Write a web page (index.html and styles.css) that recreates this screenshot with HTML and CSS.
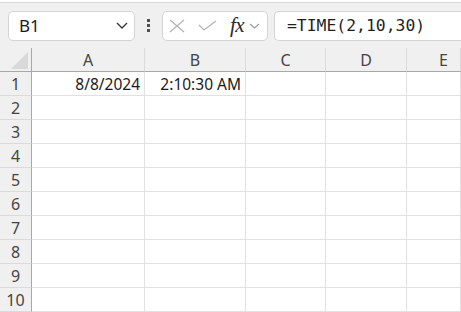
FILE: index.html
```html
<!DOCTYPE html>
<html lang="en">
<head>
  <meta charset="UTF-8">
  <title>Sheet</title>
  <link rel="stylesheet" href="styles.css">
</head>
<body>
  <div class="topband"></div>

  <!-- formula bar -->
  <div class="formulabar">
    <div class="namebox">
      <span>B1</span>
      <svg class="chev" width="12" height="7" viewBox="0 0 12 7"><path d="M1 1l5 5 5-5" fill="none" stroke="#333" stroke-width="1.3"/></svg>
    </div>
    <div class="dots"><i></i><i></i><i></i></div>
    <div class="fnbox">
      <svg width="16" height="14" viewBox="0 0 16 14"><path d="M1 1l14 12M15 1L1 13" stroke="#b4b4b4" stroke-width="1.3" fill="none"/></svg>
      <svg width="19" height="11" viewBox="0 0 19 11"><path d="M1 5l5 5L18 1" stroke="#b4b4b4" stroke-width="1.3" fill="none"/></svg>
      <span class="fx">fx</span>
      <svg width="11" height="6" viewBox="0 0 11 6"><path d="M1 1l4.5 4 4.5-4" fill="none" stroke="#999" stroke-width="1.1"/></svg>
    </div>
    <div class="formula">=TIME(2,10,30)</div>
  </div>

  <!-- grid -->
  <div class="sheet">
    <div class="corner"><svg width="17" height="17" viewBox="0 0 17 17"><path d="M17 0V17H0Z" fill="#d9d9d9"/></svg></div>
    <div class="colhead">A</div>
    <div class="colhead">B</div>
    <div class="colhead">C</div>
    <div class="colhead">D</div>
    <div class="colhead last">E</div>

    <div class="rowhead">1</div><div class="cell">8/8/2024</div><div class="cell">2:10:30 AM</div><div class="cell"></div><div class="cell"></div><div class="cell"></div>
    <div class="rowhead">2</div><div class="cell"></div><div class="cell"></div><div class="cell"></div><div class="cell"></div><div class="cell"></div>
    <div class="rowhead">3</div><div class="cell"></div><div class="cell"></div><div class="cell"></div><div class="cell"></div><div class="cell"></div>
    <div class="rowhead">4</div><div class="cell"></div><div class="cell"></div><div class="cell"></div><div class="cell"></div><div class="cell"></div>
    <div class="rowhead">5</div><div class="cell"></div><div class="cell"></div><div class="cell"></div><div class="cell"></div><div class="cell"></div>
    <div class="rowhead">6</div><div class="cell"></div><div class="cell"></div><div class="cell"></div><div class="cell"></div><div class="cell"></div>
    <div class="rowhead">7</div><div class="cell"></div><div class="cell"></div><div class="cell"></div><div class="cell"></div><div class="cell"></div>
    <div class="rowhead">8</div><div class="cell"></div><div class="cell"></div><div class="cell"></div><div class="cell"></div><div class="cell"></div>
    <div class="rowhead">9</div><div class="cell"></div><div class="cell"></div><div class="cell"></div><div class="cell"></div><div class="cell"></div>
    <div class="rowhead">10</div><div class="cell"></div><div class="cell"></div><div class="cell"></div><div class="cell"></div><div class="cell"></div>
  </div>
</body>
</html>
```

FILE: styles.css
```css
:root {
  --chrome: #f0f0f0;
  --box-border: #d4d4d4;
  --grid: #e1e1e1;
  --head-line: #a8a8a8;
  --text: #1a1a1a;
}
* { margin: 0; padding: 0; box-sizing: border-box; }
body {
  background: #fff;
  color: var(--text);
  font-family: "Noto Sans", "Open Sans", sans-serif;
  overflow: hidden;
}
.topband {
  height: 3px;
  background: #fff;
  border-bottom: 1px solid #d6d6d6;
}
.formulabar {
  display: flex;
  align-items: center;
  height: 45px;
  padding-left: 8px;
  background: var(--chrome);
}
.namebox, .fnbox, .formula {
  height: 30px;
  background: #fff;
  border: 1px solid var(--box-border);
  border-radius: 5px;
  display: flex;
  align-items: center;
}
.namebox {
  width: 127px;
  padding: 0 6px 0 10px;
  justify-content: space-between;
  font-size: 17px;
}
.dots {
  display: flex;
  flex-direction: column;
  gap: 2px;
  margin: 0 12px;
}
.dots i { width: 3px; height: 3px; background: #505050; }
.fnbox {
  width: 106px;
  padding-left: 6px;
  gap: 12px;
}
.fnbox svg:nth-of-type(2) { margin-left: 1px; }
.fx {
  font-family: "Liberation Serif", "DejaVu Serif", serif;
  font-style: italic;
  font-size: 21px;
  color: #2a2a2a;
  margin: 0 -7px 0 1px;
  letter-spacing: -0.5px;
}
.formula {
  flex: 1;
  min-width: 0;
  margin-left: 6px;
  border-right: none;
  border-radius: 5px 0 0 5px;
  padding-left: 12px;
  font-family: "DejaVu Sans Mono", "Liberation Mono", monospace;
  font-size: 16.4px;
  color: #1f1f1f;
}
.sheet {
  display: grid;
  grid-template-columns: 32px 113px 101px 80px 81px 54px;
  grid-auto-rows: 24px;
}
.corner, .colhead {
  background: var(--chrome);
  border-bottom: 1px solid var(--head-line);
}
.corner {
  border-right: 1px solid var(--head-line);
  display: flex;
  align-items: flex-end;
  justify-content: flex-end;
  padding: 0 3px 2px 0;
}
.colhead {
  border-right: 1px solid #dadada;
  display: flex;
  align-items: center;
  justify-content: center;
  font-size: 16px;
  color: #444;
}
.colhead.last {
  justify-content: flex-start;
  padding-left: 32px;
}
.rowhead {
  background: var(--chrome);
  border-right: 1px solid var(--head-line);
  border-bottom: 1px solid #dadada;
  display: flex;
  align-items: center;
  justify-content: center;
  font-size: 16px;
  color: #444;
}
.cell {
  border-right: 1px solid var(--grid);
  border-bottom: 1px solid var(--grid);
  display: flex;
  align-items: center;
  justify-content: flex-end;
  padding-right: 4px;
  font-size: 15.5px;
  white-space: nowrap;
}
```
